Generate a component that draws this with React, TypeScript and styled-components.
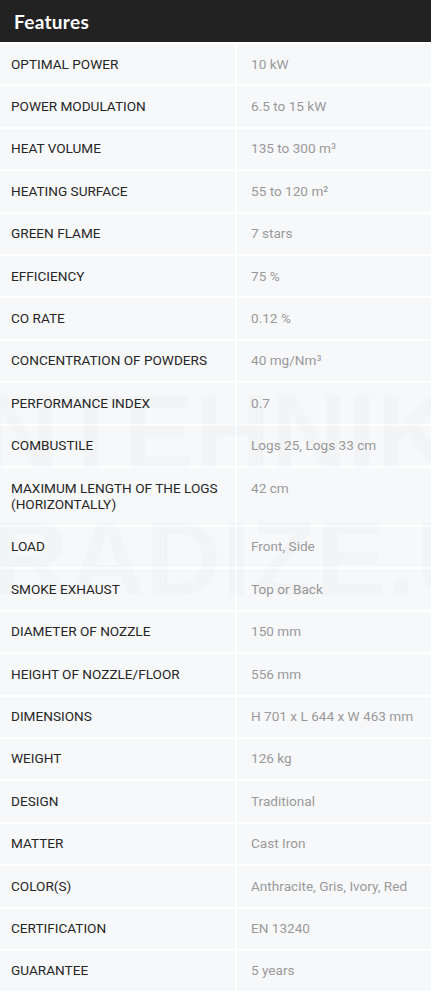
import React from "react";
import styled, { createGlobalStyle } from "styled-components";

const GlobalStyle = createGlobalStyle`
  html, body {
    margin: 0;
    padding: 0;
    background: #ffffff;
  }
  body {
    font-family: Roboto, "Liberation Sans", Arial, sans-serif;
  }
`;

const features: [string, string][] = [
  ["OPTIMAL POWER", "10 kW"],
  ["POWER MODULATION", "6.5 to 15 kW"],
  ["HEAT VOLUME", "135 to 300 m³"],
  ["HEATING SURFACE", "55 to 120 m²"],
  ["GREEN FLAME", "7 stars"],
  ["EFFICIENCY", "75 %"],
  ["CO RATE", "0.12 %"],
  ["CONCENTRATION OF POWDERS", "40 mg/Nm³"],
  ["PERFORMANCE INDEX", "0.7"],
  ["COMBUSTILE", "Logs 25, Logs 33 cm"],
  ["MAXIMUM LENGTH OF THE LOGS (HORIZONTALLY)", "42 cm"],
  ["LOAD", "Front, Side"],
  ["SMOKE EXHAUST", "Top or Back"],
  ["DIAMETER OF NOZZLE", "150 mm"],
  ["HEIGHT OF NOZZLE/FLOOR", "556 mm"],
  ["DIMENSIONS", "H 701 x L 644 x W 463 mm"],
  ["WEIGHT", "126 kg"],
  ["DESIGN", "Traditional"],
  ["MATTER", "Cast Iron"],
  ["COLOR(S)", "Anthracite, Gris, Ivory, Red"],
  ["CERTIFICATION", "EN 13240"],
  ["GUARANTEE", "5 years"],
];

const Wrapper = styled.div`
  position: relative;
  width: 431px;
  overflow: hidden;
`;

const Header = styled.div`
  height: 42px;
  background: #222222;
  display: flex;
  align-items: center;
  padding: 0 14px;
  box-sizing: border-box;
`;

const Title = styled.h3`
  margin: 0;
  color: #ffffff;
  font-family: Lato, "Open Sans", sans-serif;
  font-weight: 700;
  font-size: 19px;
  letter-spacing: 0.3px;
`;

const Table = styled.div`
  display: grid;
  grid-template-columns: 235px 1fr;
  gap: 2px;
  padding-top: 2px;
`;

const Cell = styled.div<{ $value?: boolean }>`
  background: #f7f8fa;
  padding: ${({ $value }) =>
    $value ? "11.5px 12px 12.5px 14px" : "11.5px 10px 12.5px 11px"};
  font-size: 13.6px;
  line-height: 16.4px;
  color: ${({ $value }) => ($value ? "#9a9a9a" : "#262626")};
`;

const Watermark = styled.div<{ $top: number; $left: number }>`
  position: absolute;
  top: ${({ $top }) => $top}px;
  left: ${({ $left }) => $left}px;
  font-family: "Liberation Sans", Arial, sans-serif;
  font-weight: 700;
  font-size: 106px;
  line-height: 1;
  color: rgba(0, 0, 0, 0.014);
  white-space: nowrap;
  pointer-events: none;
`;

export default function App() {
  return (
    <Wrapper>
      <GlobalStyle />
      <Header>
        <Title>Features</Title>
      </Header>
      <Table>
        {features.map(([label, value]) => (
          <React.Fragment key={label}>
            <Cell>{label}</Cell>
            <Cell $value>{value}</Cell>
          </React.Fragment>
        ))}
      </Table>
      <Watermark $top={378} $left={-18}>
        NTEHNIK
      </Watermark>
      <Watermark $top={505} $left={-8}>
        RADIZE.U
      </Watermark>
    </Wrapper>
  );
}
